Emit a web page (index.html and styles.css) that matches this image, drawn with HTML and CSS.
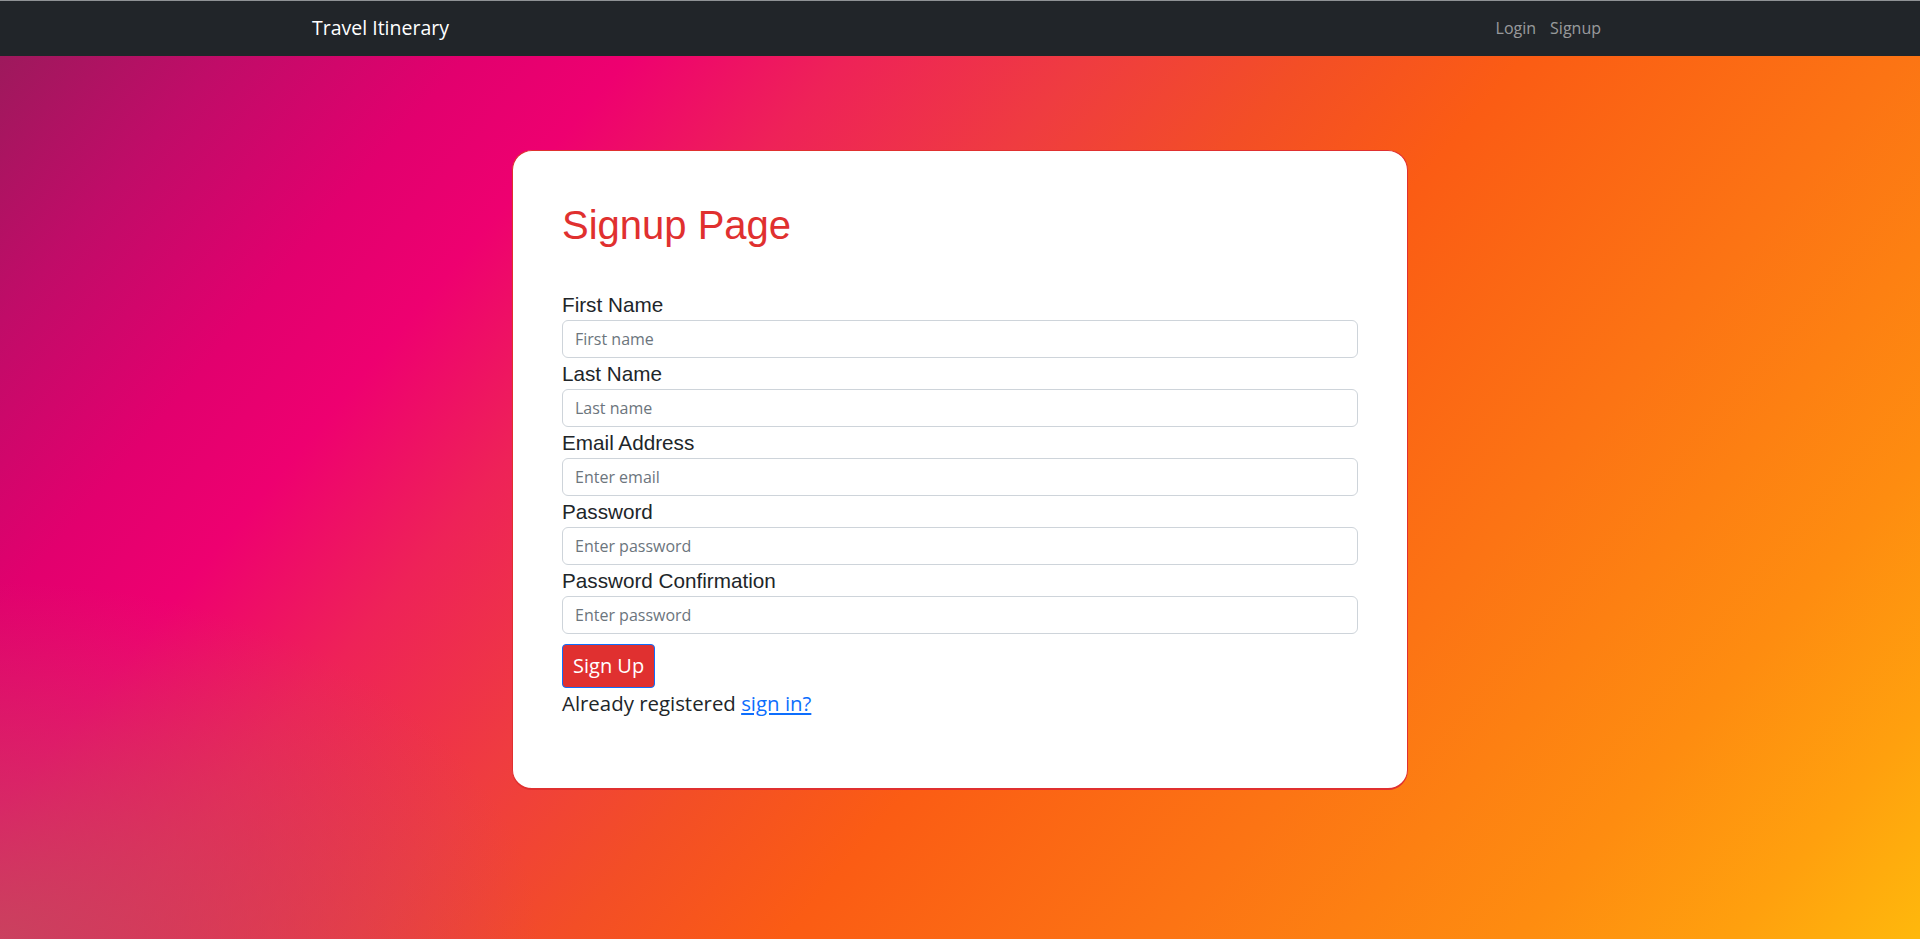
FILE: index.html
```html
<!DOCTYPE html>
<html lang="en">
<head>
<meta charset="utf-8">
<title>Travel Itinerary - Signup</title>
<link rel="stylesheet" href="styles.css">
</head>
<body>
<nav class="navbar">
  <div class="nav-inner">
    <a class="brand" href="#">Travel Itinerary</a>
    <div class="nav-links">
      <a class="nav-link" href="#">Login</a>
      <a class="nav-link" href="#">Signup</a>
    </div>
  </div>
</nav>
<main class="page">
  <section class="card">
    <h1 class="title">Signup Page</h1>
    <form class="form">
      <label class="label" for="fn">First Name</label>
      <input class="input" id="fn" type="text" placeholder="First name">
      <label class="label" for="ln">Last Name</label>
      <input class="input" id="ln" type="text" placeholder="Last name">
      <label class="label" for="em">Email Address</label>
      <input class="input" id="em" type="email" placeholder="Enter email">
      <label class="label" for="pw">Password</label>
      <input class="input" id="pw" type="password" placeholder="Enter password">
      <label class="label" for="pc">Password Confirmation</label>
      <input class="input" id="pc" type="password" placeholder="Enter password">
      <button class="btn" type="button">Sign Up</button>
      <p class="already">Already registered <a class="link" href="#">sign in?</a></p>
    </form>
  </section>
</main>
</body>
</html>
```
FILE: styles.css
```css
* { box-sizing: border-box; }
html, body { margin: 0; padding: 0; }
body {
  min-height: 100vh;
  font-family: "Open Sans", "Noto Sans", sans-serif;
  color: #212529;
  background:
    radial-gradient(ellipse 28% 38% at 0% 100%, rgba(198, 70, 94, 0.9) 0%, rgba(198, 70, 94, 0) 100%),
    linear-gradient(130deg, #961c5a 0%, #c00c68 10%, #e2006e 19%, #ee0070 25%, #ee2258 33%, #ef3c40 42%, #f34e26 50%, #fb5c14 58%, #fc7414 72%, #fe8c10 85%, #ffa00e 93%, #ffb80c 100%);
  background-attachment: fixed;
}
.navbar {
  height: 56px;
  background: #212529;
  box-shadow: inset 0 1px 0 #8f9295;
}
.nav-inner {
  width: 1320px;
  margin: 0 auto;
  padding: 8px 12px;
  display: flex;
  align-items: center;
  justify-content: space-between;
}
.brand {
  font-size: 19.5px;
  line-height: 30px;
  padding: 5px 0;
  color: #fff;
  text-decoration: none;
}
.nav-links { display: flex; }
.nav-link {
  font-size: 16px;
  line-height: 24px;
  padding: 8px 7px;
  color: rgba(255, 255, 255, 0.55);
  text-decoration: none;
}
.page {
  display: flex;
  justify-content: center;
  padding-top: 94px;
}
.card {
  width: 896px;
  background: #fff;
  border: 1px solid #e0302f;
  border-bottom-width: 2px;
  border-radius: 20px;
  padding: 49px 49px 70px 49px;
}
.title {
  margin: 0 0 39px 0;
  font-family: "Liberation Sans", Arial, sans-serif;
  font-weight: 400;
  font-size: 40px;
  line-height: 50px;
  color: #e0302f;
}
.form {
  display: flex;
  flex-direction: column;
  align-items: flex-start;
  width: 796px;
}
.label {
  font-family: "Liberation Sans", Arial, sans-serif;
  font-size: 20.7px;
  line-height: 31px;
  color: #212529;
}
.input {
  width: 100%;
  height: 38px;
  padding: 6px 12px;
  border: 1px solid #ced4da;
  border-radius: 6px;
  font-family: "Open Sans", "Noto Sans", sans-serif;
  font-size: 16px;
  color: #212529;
  background: #fff;
}
.input::placeholder { color: #6c757d; }
.btn {
  margin-top: 10px;
  height: 44px;
  padding: 0 10px;
  border: 1px solid #0d6efd;
  border-radius: 4px;
  background: #e03030;
  color: #fff;
  font-family: "Open Sans", "Noto Sans", sans-serif;
  font-size: 20px;
  line-height: 30px;
}
.already {
  margin: 0;
  font-size: 20.4px;
  line-height: 30px;
  color: #212529;
}
.link { color: #0d6efd; text-decoration: underline; }
```
